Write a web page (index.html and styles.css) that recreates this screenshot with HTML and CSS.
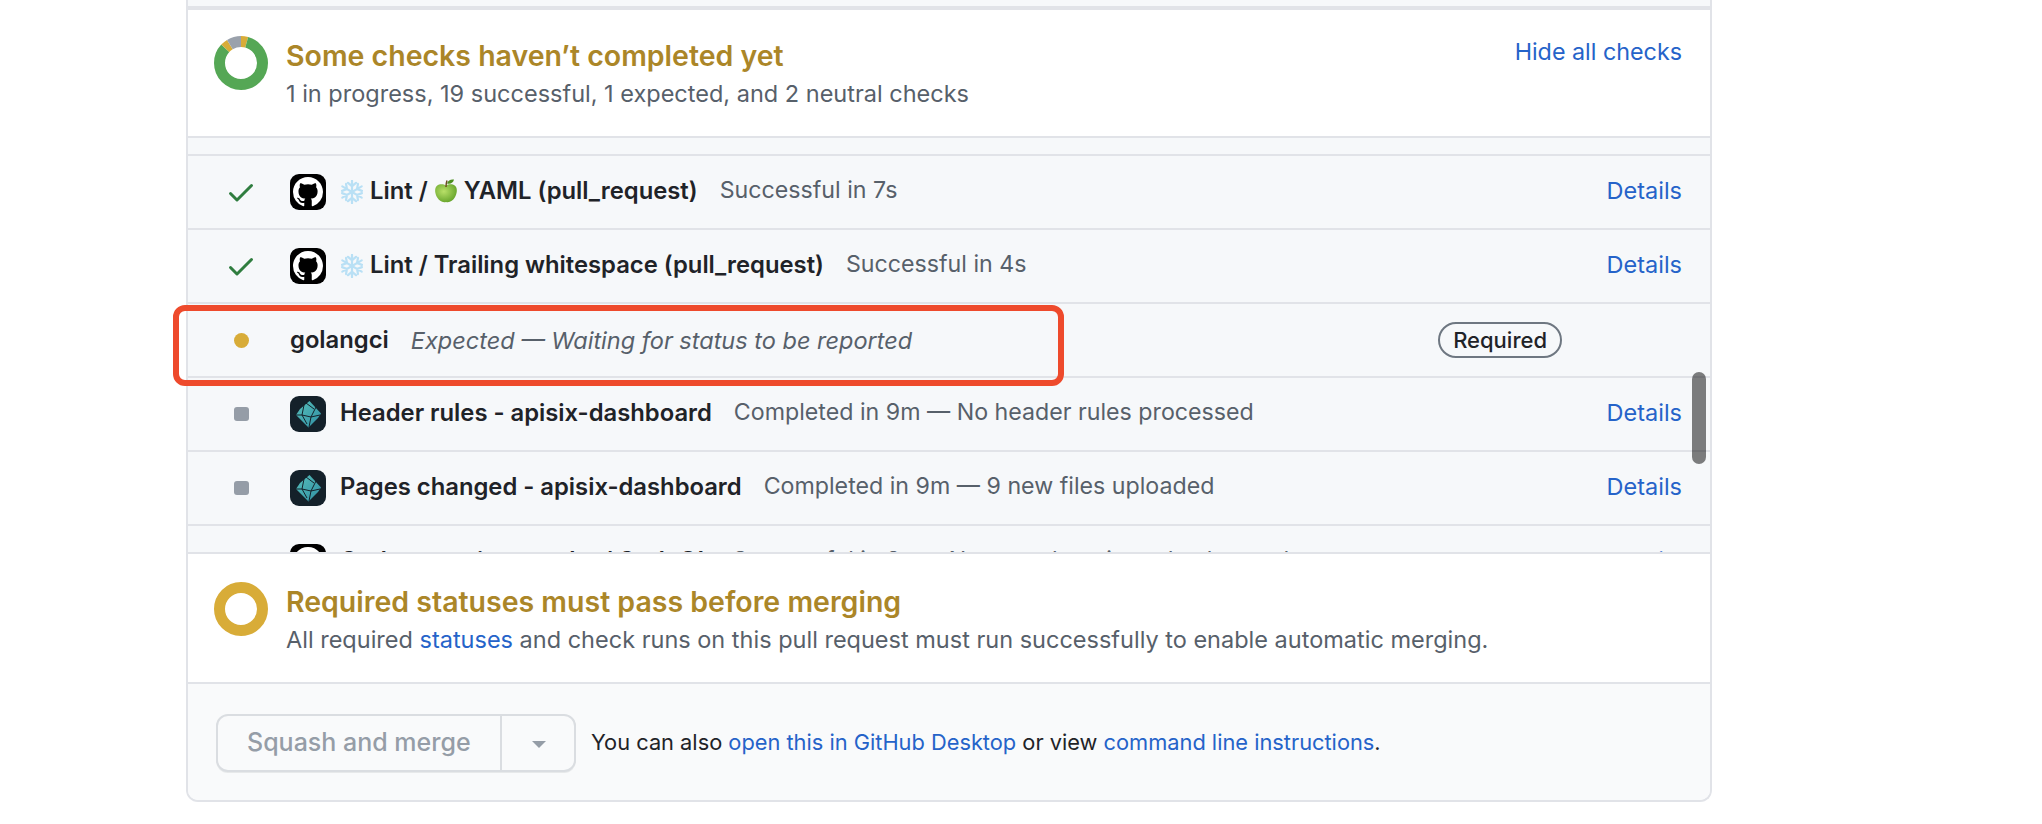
FILE: index.html
```html
<!DOCTYPE html>
<html lang="en">

<head>
    <meta charset="UTF-8">
    <title>Merge box</title>
    <link rel="stylesheet" href="styles.css">
</head>

<body>

    <svg class="sprites" width="0" height="0">
        <symbol id="i-check" viewBox="0 0 16 16">
            <path fill="currentColor" d="M13.78 4.22a.75.75 0 0 1 0 1.06l-7.25 7.25a.75.75 0 0 1-1.06 0L2.22 9.28a.751.751 0 0 1 .018-1.042.751.751 0 0 1 1.042-.018L6 10.94l6.72-6.72a.75.75 0 0 1 1.06 0Z" />
        </symbol>
        <symbol id="i-actions" viewBox="0 0 36 36">
            <rect width="36" height="36" rx="9" fill="#000" />
            <g transform="translate(3 3) scale(1.875)">
                <path fill="#fff" d="M8 0c4.42 0 8 3.58 8 8a8.013 8.013 0 0 1-5.45 7.59c-.4.08-.55-.17-.55-.38 0-.27.01-1.13.01-2.2 0-.75-.25-1.23-.54-1.48 1.78-.2 3.65-.88 3.65-3.95 0-.88-.31-1.59-.82-2.15.08-.2.36-1.02-.08-2.12 0 0-.67-.22-2.2.82-.64-.18-1.32-.27-2-.27-.68 0-1.36.09-2 .27-1.53-1.03-2.2-.82-2.2-.82-.44 1.1-.16 1.92-.08 2.12-.51.56-.82 1.28-.82 2.15 0 3.06 1.86 3.75 3.64 3.95-.23.2-.44.55-.51 1.07-.46.21-1.61.55-2.33-.66-.15-.24-.6-.83-1.23-.82-.67.01-.27.38.01.53.34.19.73.9.82 1.13.16.45.68 1.31 2.69.94 0 .67.01 1.3.01 1.49 0 .21-.15.45-.55.38A7.995 7.995 0 0 1 0 8c0-4.42 3.58-8 8-8Z" />
            </g>
        </symbol>
        <symbol id="i-netlify" viewBox="0 0 36 36">
            <defs>
                <linearGradient id="netlify-fill" x1="0" y1="0" x2="1" y2="1">
                    <stop offset="0" stop-color="#58c0bb" />
                    <stop offset="1" stop-color="#2f8ea3" />
                </linearGradient>
            </defs>
            <rect width="36" height="36" rx="9" fill="#14212a" />
            <path fill="url(#netlify-fill)" d="M19.500 5 31 17.500 28 22 18.500 31.500 6 19 10 13Z" />
            <path fill="none" stroke="#14212a" stroke-width="1" d="M14 9 12 19 6 19M12 19 21 21 26 11M21 21 19 31M21 21 30 19M12 19 17 28M16 7 24 13" />
        </symbol>
        <symbol id="i-snow" viewBox="0 0 24 24">
            <g fill="none" stroke="#b9e0f5" stroke-width="2.200" stroke-linecap="round">
                <g id="snow-arm">
                    <path d="M12 12V.8M8 2.800 12 6.200 16 2.800" />
                </g>
                <use href="#snow-arm" transform="rotate(60 12 12)" />
                <use href="#snow-arm" transform="rotate(120 12 12)" />
                <use href="#snow-arm" transform="rotate(180 12 12)" />
                <use href="#snow-arm" transform="rotate(240 12 12)" />
                <use href="#snow-arm" transform="rotate(300 12 12)" />
            </g>
        </symbol>
        <symbol id="i-apple" viewBox="0 0 24 24">
            <defs>
                <radialGradient id="apple-fill" cx="0.4" cy="0.4" r="0.7">
                    <stop offset="0" stop-color="#b8e068" />
                    <stop offset="1" stop-color="#5f9f26" />
                </radialGradient>
            </defs>
            <path fill="url(#apple-fill)" d="M12 6.500c2.500-1.600 6.500-1.800 9 .3 2.800 2.500 2.200 8-.4 12-1.800 2.900-4.500 5-8.600 4.200-4.100.8-6.800-1.300-8.600-4.200-2.600-4-3.200-9.500-.4-12 2.500-2.100 6.500-1.900 9-.3Z" />
            <path fill="none" stroke="#6b4a1e" stroke-width="1.500" d="M12 8c0-2.500.3-4.500 1-6.500" />
            <path fill="#4c8f1f" d="M13 4.500c1-3.500 4-4.500 7-4-.5 3-3.500 5-7 4Z" />
        </symbol>
    </svg>

    <div class="merge-box">
        <div class="top-strip"></div>

        <div class="summary">
            <svg class="donut" viewBox="0 0 54 54">
                <g fill="none" stroke-width="11" transform="rotate(-90 27 27)">
                    <circle cx="27" cy="27" r="21.500" pathLength="23" stroke="#d8ac38" stroke-dasharray="1 22" />
                    <circle cx="27" cy="27" r="21.500" pathLength="23" stroke="#55a755" stroke-dasharray="19 4" stroke-dashoffset="-1" />
                    <circle cx="27" cy="27" r="21.500" pathLength="23" stroke="#d8ac38" stroke-dasharray="1 22" stroke-dashoffset="-20" />
                    <circle cx="27" cy="27" r="21.500" pathLength="23" stroke="#9aa1ab" stroke-dasharray="2 21" stroke-dashoffset="-21" />
                </g>
            </svg>
            <div class="summary-text">
                <h3 class="summary-title">Some checks haven’t completed yet</h3>
                <p class="summary-sub">1 in progress, 19 successful, 1 expected, and 2 neutral checks</p>
            </div>
            <a class="link hide-link" href="#">Hide all checks</a>
        </div>

        <div class="check-scroll">
            <div class="check-list">
                <div class="check-row">
                    <span class="status"><svg class="status-check"><use href="#i-check" /></svg></span>
                    <svg class="avatar"><use href="#i-actions" /></svg>
                    <svg class="emoji"><use href="#i-snow" /></svg>
                    <strong class="check-name">Lint / <svg class="emoji emoji-inline"><use href="#i-apple" /></svg> YAML (pull_request)</strong>
                    <span class="check-desc">Successful in 7s</span>
                    <a class="link details" href="#">Details</a>
                </div>
                <div class="check-row">
                    <span class="status"><svg class="status-check"><use href="#i-check" /></svg></span>
                    <svg class="avatar"><use href="#i-actions" /></svg>
                    <svg class="emoji"><use href="#i-snow" /></svg>
                    <strong class="check-name">Lint / Trailing whitespace (pull_request)</strong>
                    <span class="check-desc">Successful in 4s</span>
                    <a class="link details" href="#">Details</a>
                </div>
                <div class="check-row check-row-plain">
                    <span class="status"><i class="status-dot"></i></span>
                    <strong class="check-name">golangci</strong>
                    <em class="check-desc">Expected — Waiting for status to be reported</em>
                    <span class="required-label">Required</span>
                </div>
                <div class="check-row">
                    <span class="status"><i class="status-square"></i></span>
                    <svg class="avatar avatar-gap"><use href="#i-netlify" /></svg>
                    <strong class="check-name">Header rules - apisix-dashboard</strong>
                    <span class="check-desc">Completed in 9m — No header rules processed</span>
                    <a class="link details" href="#">Details</a>
                </div>
                <div class="check-row">
                    <span class="status"><i class="status-square"></i></span>
                    <svg class="avatar avatar-gap"><use href="#i-netlify" /></svg>
                    <strong class="check-name">Pages changed - apisix-dashboard</strong>
                    <span class="check-desc">Completed in 9m — 9 new files uploaded</span>
                    <a class="link details" href="#">Details</a>
                </div>
                <div class="check-row">
                    <span class="status"><svg class="status-check"><use href="#i-check" /></svg></span>
                    <svg class="avatar avatar-gap"><use href="#i-actions" /></svg>
                    <strong class="check-name">Code scanning results / CodeQL</strong>
                    <span class="check-desc">Successful in 2s — No new alerts in code changed</span>
                    <a class="link details" href="#">Details</a>
                </div>
            </div>
            <div class="scroll-thumb"></div>
        </div>

        <div class="requirement">
            <span class="ring"></span>
            <div class="summary-text">
                <h3 class="summary-title">Required statuses must pass before merging</h3>
                <p class="summary-sub">All required <a class="link" href="#">statuses</a> and check runs on this pull request must run successfully to enable automatic merging.</p>
            </div>
        </div>

        <div class="merge-footer">
            <div class="merge-btn">
                <span class="merge-btn-label">Squash and merge</span>
                <span class="merge-btn-caret"></span>
            </div>
            <p class="merge-note">You can also <a class="link" href="#">open this in GitHub Desktop</a> or view <a class="link" href="#">command line instructions</a>.</p>
        </div>

        <div class="highlight"></div>
    </div>

</body>

</html>
```

FILE: styles.css
```css
body {
    margin: 0;
    background: #fff;
    font-family: "Inter", "Liberation Sans", sans-serif;
    font-size: 24px;
    color: #1f2328;
}

.sprites {
    position: absolute;
}

.link {
    color: #2563c9;
    text-decoration: none;
}

.merge-box {
    position: relative;
    box-sizing: border-box;
    width: 1526px;
    margin-left: 186px;
    border: 2px solid #e1e3e8;
    border-top: 0;
    border-radius: 0 0 12px 12px;
}

.top-strip {
    height: 6px;
    background: #f6f8fa;
}

.summary {
    display: flex;
    box-sizing: border-box;
    height: 132px;
    padding: 26px 28px 0 26px;
    border-top: 4px solid #e1e3e8;
    border-bottom: 2px solid #e1e3e8;
}

.donut {
    flex: none;
    width: 54px;
    height: 54px;
    margin-right: 18px;
}

.summary-text {
    padding-top: 1px;
}

.summary-title {
    margin: 0;
    font-size: 28.500px;
    line-height: 38px;
    font-weight: 600;
    color: #ab8628;
}

.summary-sub {
    margin: 0;
    font-size: 23.500px;
    line-height: 37px;
    color: #57606a;
}

.hide-link {
    margin-left: auto;
    margin-top: -2px;
    font-size: 23.300px;
    line-height: 36px;
}

.check-scroll {
    position: relative;
    height: 414px;
    padding-top: 16px;
    box-sizing: border-box;
    overflow: hidden;
    background: #f6f8fa;
}

.check-row {
    display: flex;
    align-items: center;
    box-sizing: border-box;
    height: 74px;
    padding: 0 28px;
    border-top: 2px solid #e1e3e8;
    font-size: 23.500px;
}

.status {
    display: flex;
    flex: none;
    align-items: center;
    justify-content: center;
    width: 50px;
    height: 36px;
    margin-right: 24px;
}

.status-check {
    width: 32px;
    height: 32px;
    color: #2f7d3f;
}

.status-dot {
    width: 15px;
    height: 15px;
    border-radius: 50%;
    background: #d8ac38;
}

.status-square {
    width: 15px;
    height: 14px;
    border-radius: 3px;
    background: #959da7;
}

.avatar {
    flex: none;
    width: 36px;
    height: 36px;
    margin-right: 14px;
}

.avatar-gap {
    margin-right: 14px;
}

.emoji {
    flex: none;
    width: 24px;
    height: 24px;
    margin-right: 6px;
}

.emoji-inline {
    margin: 0;
    vertical-align: -4px;
}

.check-name {
    margin-bottom: 4px;
    font-size: 23.800px;
    font-weight: 600;
    white-space: nowrap;
}

.check-desc {
    margin-left: 22px;
    margin-bottom: 4px;
    font-size: 23.200px;
    color: #57606a;
    white-space: nowrap;
}

.check-row-plain .check-name {
    margin-bottom: 2px;
}

.check-row-plain .check-desc {
    margin-bottom: 0;
    font-size: 23.500px;
}

.details {
    margin-left: auto;
    margin-bottom: 4px;
}

.required-label {
    box-sizing: border-box;
    height: 36px;
    margin-left: auto;
    margin-right: 120px;
    padding: 0 13px;
    border: 2px solid #6e7781;
    border-radius: 18px;
    font-size: 22px;
    line-height: 33px;
    font-weight: 500;
}

.scroll-thumb {
    position: absolute;
    top: 234px;
    right: 4px;
    width: 14px;
    height: 92px;
    border-radius: 7px;
    background: rgba(0, 0, 0, 0.5);
}

.requirement {
    display: flex;
    box-sizing: border-box;
    height: 132px;
    padding: 28px 28px 0 26px;
    border-top: 2px solid #e1e3e8;
    border-bottom: 2px solid #e1e3e8;
}

.ring {
    flex: none;
    box-sizing: border-box;
    width: 54px;
    height: 54px;
    margin-right: 18px;
    border: 11px solid #d8ac38;
    border-radius: 50%;
}

.merge-footer {
    display: flex;
    align-items: flex-start;
    height: 116px;
    padding: 30px 0 0 28px;
    box-sizing: border-box;
    background: #f9fafb;
    border-radius: 0 0 10px 10px;
}

.merge-btn {
    display: flex;
    box-sizing: border-box;
    width: 360px;
    height: 58px;
    border: 2px solid #dadde1;
    border-radius: 12px;
    background: #f9fafb;
    box-shadow: 0 1px 0 rgba(31, 35, 40, 0.08);
}

.merge-btn-label {
    width: 284px;
    padding-left: 29px;
    box-sizing: border-box;
    border-right: 2px solid #dadde1;
    font-size: 25px;
    line-height: 52px;
    font-weight: 500;
    color: #959da7;
}

.merge-btn-caret {
    width: 0;
    height: 0;
    margin: 25px 0 0 30px;
    border-top: 7px solid #959da7;
    border-left: 7px solid transparent;
    border-right: 7px solid transparent;
}

.merge-note {
    margin: 0 0 0 15px;
    font-size: 21.800px;
    line-height: 56px;
}

.highlight {
    position: absolute;
    left: -15px;
    top: 305px;
    width: 891px;
    height: 81px;
    box-sizing: border-box;
    border: 6px solid #ee4a2c;
    border-radius: 12px;
}
```
